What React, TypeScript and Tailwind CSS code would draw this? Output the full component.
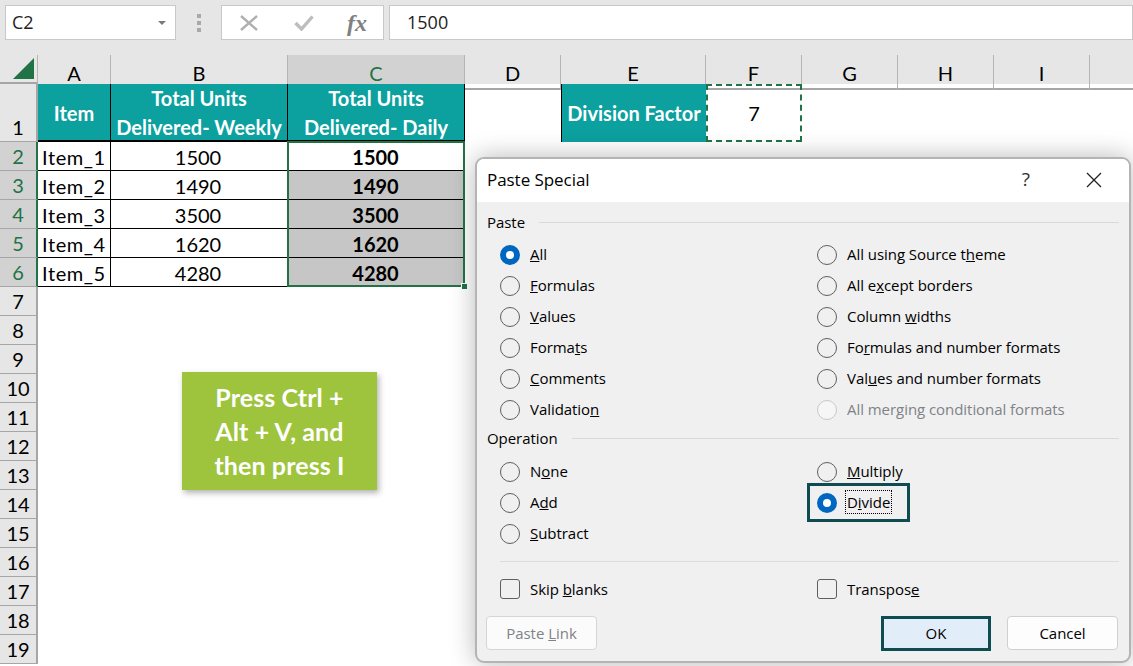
import React from "react";

const LATO = "font-['Lato','Liberation_Sans',sans-serif]";
const UI = "font-['Open_Sans','Liberation_Sans',sans-serif]";

const columns = ["A", "B", "C", "D", "E", "F", "G", "H", "I"];
const items = [
  ["Item_1", "1500"],
  ["Item_2", "1490"],
  ["Item_3", "3500"],
  ["Item_4", "1620"],
  ["Item_5", "4280"],
];
const lastRow = 19;

function ColHeader({ name }: { name: string }) {
  const active = name === "C";
  return (
    <div
      className={`flex items-center justify-center border-r border-r-[#b5b5b5] text-[20px] pt-[3px] border-b-2 ${
        active ? "bg-[#d2d2d2] text-[#217346] border-b-[#217346]" : "text-black border-b-[#a6a6a6]"
      }`}
    >
      {name}
    </div>
  );
}

function RowHeader({ n }: { n: number }) {
  const active = n >= 2 && n <= 6;
  return (
    <div
      className={`col-start-1 flex items-end justify-center border-b border-b-[#a6a6a6] text-[20px] leading-[28px] ${
        active
          ? "bg-[#d2d2d2] text-[#217346] border-r-2 border-r-[#217346]"
          : "bg-[#e6e6e6] text-black border-r-2 border-r-[#a6a6a6]"
      }`}
    >
      {n}
    </div>
  );
}

function HeaderCell({ children, wide }: { children: React.ReactNode; wide?: boolean }) {
  return (
    <div
      className={`flex flex-col items-center justify-center bg-[#0ca09f] border-r border-b-2 border-black text-white font-bold text-[20px] leading-[29px] pt-[2px] ${
        wide ? "whitespace-nowrap" : ""
      }`}
    >
      {children}
    </div>
  );
}

function Radio({ label, checked, disabled }: { label: React.ReactNode; checked?: boolean; disabled?: boolean }) {
  return (
    <div className={`flex items-center h-[31px] gap-[10px] ${disabled ? "text-[#7f8388]" : "text-black"}`}>
      <span
        className={`w-[20px] h-[20px] rounded-full shrink-0 ${
          checked
            ? "border-[6px] border-[#0067c0] bg-white"
            : disabled
              ? "border border-[#c9c9c9] bg-[#f6f6f6]"
              : "border border-[#5f5f5f]"
        }`}
      />
      <span>{label}</span>
    </div>
  );
}

function Check({ label }: { label: React.ReactNode }) {
  return (
    <div className="flex items-center gap-[10px]">
      <span className="w-[20px] h-[20px] rounded-[3px] border border-[#5f5f5f] shrink-0" />
      <span>{label}</span>
    </div>
  );
}

function SectionTitle({ title }: { title: string }) {
  return (
    <div className="flex items-center gap-[14px] h-[28px] pl-[10px] pr-[10px]">
      <span>{title}</span>
      <span className="flex-1 h-px bg-[#d9d9d9]" />
    </div>
  );
}

function PasteDialog() {
  return (
    <div
      className={`absolute left-[475px] top-[157px] w-[656px] h-[506px] rounded-[9px] border-2 border-[#b4b4b4] bg-[#f0f0f0] overflow-hidden shadow-[0_0_26px_rgba(0,0,0,0.28)] text-[15px] tracking-[-0.05px] text-black ${UI}`}
    >
      <div className="flex items-center h-[43px] bg-white pl-[10px] pr-[27px] text-[17px] pb-[2px]">
        <span className="flex-1">Paste Special</span>
        <span className="mr-[56px] text-[#333] text-[19px]">?</span>
        <svg width="16" height="16" viewBox="0 0 16 16" className="stroke-[#222]" fill="none" strokeWidth="1.3">
          <path d="M1 1l14 14M15 1L1 15" />
        </svg>
      </div>

      <div className="pt-[6px]">
        <SectionTitle title="Paste" />
      </div>
      <div className="grid grid-cols-[317px_1fr] pl-[23px] pt-[3px]">
        <div>
          <Radio checked label={<><u>A</u>ll</>} />
          <Radio label={<><u>F</u>ormulas</>} />
          <Radio label={<><u>V</u>alues</>} />
          <Radio label={<>Forma<u>t</u>s</>} />
          <Radio label={<><u>C</u>omments</>} />
          <Radio label={<>Validatio<u>n</u></>} />
        </div>
        <div>
          <Radio label={<>All using Source t<u>h</u>eme</>} />
          <Radio label={<>All e<u>x</u>cept borders</>} />
          <Radio label={<>Column <u>w</u>idths</>} />
          <Radio label={<>Fo<u>r</u>mulas and number formats</>} />
          <Radio label={<>Val<u>u</u>es and number formats</>} />
          <Radio disabled label="All merging conditional formats" />
        </div>
      </div>

      <div className="-mt-px">
        <SectionTitle title="Operation" />
      </div>
      <div className="grid grid-cols-[317px_1fr] pl-[23px] pt-[4px]">
        <div>
          <Radio label={<>N<u>o</u>ne</>} />
          <Radio label={<>A<u>d</u>d</>} />
          <Radio label={<><u>S</u>ubtract</>} />
        </div>
        <div>
          <Radio label={<><u>M</u>ultiply</>} />
          <div className="relative">
            <Radio checked label={<span className="outline-1 outline-dotted outline-black outline-offset-[1px]">D<u>i</u>vide</span>} />
            <div className="absolute left-[-10px] top-[-4px] w-[103px] h-[39px] border-[3px] border-[#0f4c52]" />
          </div>
        </div>
      </div>

      <div className="h-px bg-[#dcdcdc] ml-[23px] mr-[10px] mt-[12px]" />
      <div className="grid grid-cols-[317px_1fr] pl-[23px] pt-[16px]">
        <Check label={<>Skip <u>b</u>lanks</>} />
        <Check label={<>Transpos<u>e</u></>} />
      </div>

      <div className="flex items-center pl-[9px] pr-[11px] pt-[15px]">
        <div className="w-[111px] h-[34px] flex items-center justify-center rounded-[4px] border border-[#d5d5d5] bg-[#fbfbfb] text-[#7f8388]">
          Paste <u className="ml-[4px]">L</u>ink
        </div>
        <div className="ml-auto w-[110px] h-[35px] flex items-center justify-center border-[3px] border-[#0f4c52] bg-[#e1edf8]">
          OK
        </div>
        <div className="ml-[16px] w-[111px] h-[34px] flex items-center justify-center rounded-[4px] border border-[#d0d0d0] bg-[#fdfdfd]">
          Cancel
        </div>
      </div>
    </div>
  );
}

export default function App() {
  return (
    <div className={`relative w-[1133px] h-[666px] overflow-hidden bg-white ${LATO}`}>
      {/* formula bar */}
      <div className={`flex items-start h-[55px] bg-[#e6e6e6] pt-[5px] pl-[5px] text-[18px] text-[#222] ${UI}`}>
        <div className="flex items-center justify-between w-[171px] h-[35px] bg-white border border-[#c8c8c8] pl-[6px] pr-[9px]">
          <span>C2</span>
          <span className="w-0 h-0 border-x-[4px] border-x-transparent border-t-[4px] border-t-[#7a7a7a]" />
        </div>
        <div className="flex flex-col gap-[3px] ml-[21px] mt-[9px] w-[4px]">
          <span className="w-[4px] h-[4px] bg-[#a9a9a9]" />
          <span className="w-[4px] h-[4px] bg-[#a9a9a9]" />
          <span className="w-[4px] h-[4px] bg-[#a9a9a9]" />
        </div>
        <div className="flex items-center w-[163px] h-[35px] ml-[20px] bg-white border border-[#c8c8c8]">
          <svg width="18" height="16" viewBox="0 0 18 16" className="ml-[18px] stroke-[#b0b0b0]" fill="none" strokeWidth="2.4">
            <path d="M1 1l16 14M17 1L1 15" />
          </svg>
          <svg width="20" height="16" viewBox="0 0 20 16" className="ml-[36px] stroke-[#bdbdbd]" fill="none" strokeWidth="3.4">
            <path d="M1.5 8l6 6L18.5 1.5" />
          </svg>
          <span className="ml-[33px] font-['Liberation_Serif',serif] italic font-bold text-[24px] leading-none text-[#808080]">fx</span>
        </div>
        <div className="flex items-center flex-1 h-[35px] ml-[5px] bg-white border border-[#c8c8c8] pl-[17px]">1500</div>
      </div>

      {/* sheet */}
      <div className="relative grid grid-cols-[38px_73px_177px_177px_96px_145px_96px_96px_96px_96px_1fr] grid-rows-[29px_58px] auto-rows-[29px]">
        <div className="flex items-end justify-end bg-[#e6e6e6] border-r border-r-[#b5b5b5] border-b-2 border-b-[#a6a6a6] pr-[3px] pb-[3px]">
          <svg width="21" height="21" viewBox="0 0 21 21">
            <path d="M21 0v21H0z" fill="#217346" />
          </svg>
        </div>
        <div className="col-span-10 grid grid-cols-subgrid bg-[#e6e6e6]">
          {columns.map((c) => (
            <ColHeader key={c} name={c} />
          ))}
          <div className="border-b-2 border-b-[#a6a6a6]" />
        </div>

        <RowHeader n={1} />
        <HeaderCell>Item</HeaderCell>
        <HeaderCell wide>
          <span>Total Units</span>
          <span>Delivered- Weekly</span>
        </HeaderCell>
        <HeaderCell wide>
          <span>Total Units</span>
          <span>Delivered- Daily</span>
        </HeaderCell>
        <div />
        <div className="flex items-center justify-center bg-[#0ca09f] border-l border-black text-white font-bold text-[20px]">
          Division Factor
        </div>
        <div className="flex items-center justify-center border-2 border-dashed border-[#217346] text-[20px] text-black">7</div>

        {items.map(([name, units], i) => (
          <React.Fragment key={name}>
            <RowHeader n={i + 2} />
            <div className="flex items-center pl-[4px] pt-px border-r border-b border-black text-[20px] tracking-[0.6px] text-black">{name}</div>
            <div className="flex items-center justify-center pt-px pr-[2px] border-r border-b border-black text-[20px] text-black">{units}</div>
            <div
              className={`flex items-center justify-center pt-px pr-[2px] border-b border-black text-[20px] font-bold text-black ${
                i === 0 ? "bg-white" : "bg-[#c6c6c6]"
              }`}
            >
              {units}
            </div>
          </React.Fragment>
        ))}

        {Array.from({ length: lastRow - 6 }, (_, i) => (
          <RowHeader key={i} n={i + 7} />
        ))}

        {/* selection around C2:C6 */}
        <div className="absolute left-[287px] top-[86px] w-[178px] h-[146px] border-2 border-[#217346] pointer-events-none">
          <span className="absolute right-[-5px] bottom-[-5px] w-[7px] h-[7px] bg-[#217346] border border-white" />
        </div>
      </div>

      {/* note */}
      <div className="absolute left-[182px] top-[372px] w-[195px] h-[118px] flex flex-col items-center justify-center bg-[#9dc43c] text-white font-bold text-[25px] leading-[34px] tracking-[0.1px] shadow-[2px_3px_6px_rgba(0,0,0,0.3)]">
        <span>Press Ctrl +</span>
        <span>Alt + V, and</span>
        <span>then press I</span>
      </div>

      <PasteDialog />
    </div>
  );
}
